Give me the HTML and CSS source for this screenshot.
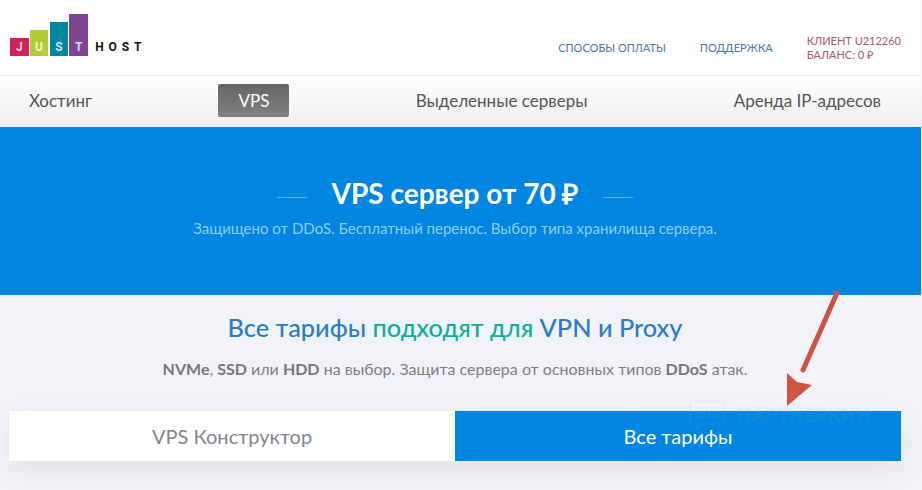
FILE: index.html
```html
<!DOCTYPE html>
<html lang="ru">
<head>
  <meta charset="UTF-8" />
  <title>VPS сервер</title>
  <link rel="stylesheet" href="styles.css">
</head>
<body>
  <div class="page">
    <header class="top">
      <a class="logo">
        <span class="bar bar-j">J</span>
        <span class="bar bar-u">U</span>
        <span class="bar bar-s">S</span>
        <span class="bar bar-t">T</span>
        <span class="logo-host">HOST</span>
      </a>
      <nav class="top-links">
        <a>СПОСОБЫ ОПЛАТЫ</a>
        <a>ПОДДЕРЖКА</a>
        <div class="client">КЛИЕНТ U212260<br>БАЛАНС: 0 ₽</div>
      </nav>
    </header>

    <nav class="menu">
      <a>Хостинг</a>
      <a class="active">VPS</a>
      <a>Выделенные серверы</a>
      <a class="last">Аренда IP-адресов</a>
    </nav>

    <section class="hero">
      <h1><span>VPS сервер от 70 ₽</span></h1>
      <p>Защищено от DDoS. Бесплатный перенос. Выбор типа хранилища сервера.</p>
    </section>

    <section class="plans">
      <h2>Все тарифы <span>подходят для</span> VPN и Proxy</h2>
      <p><b>NVMe</b>, <b>SSD</b> или <b>HDD</b> на выбор. Защита сервера от основных типов <b>DDoS</b> атак.</p>
      <div class="tabs">
        <a class="tab">VPS Конструктор</a>
        <a class="tab tab-on">Все тарифы</a>
      </div>
    </section>
  </div>

  <div class="mark">
    <svg width="36" height="29" viewBox="0 0 36 29" fill="none" stroke="#a8b2c0" stroke-width="1.2">
      <path d="M3 1h30a2 2 0 0 1 2 2v19a2 2 0 0 1-2 2H14l-6 4v-4H3a2 2 0 0 1-2-2V3a2 2 0 0 1 2-2z"/>
      <rect x="7" y="12" width="9" height="5" rx="2"/>
      <rect x="20" y="12" width="9" height="5" rx="2"/>
    </svg>
    <span>ПАРТНЕРКИН</span>
  </div>

  <svg class="arrow" width="70" height="125" viewBox="0 0 70 125">
    <path d="M57 3 L23 80" stroke="#cf5247" stroke-width="5" stroke-linecap="round" fill="none"/>
    <path d="M7 116 L7 83 L17 92 L32 95 Z" fill="#cf5247"/>
  </svg>
</body>
</html>
```

FILE: styles.css
```css
* {
  margin: 0;
  padding: 0;
  box-sizing: border-box;
}
body {
  font-family: Lato, 'Open Sans', sans-serif;
  background: #f1f3f8;
  width: 922px;
  height: 490px;
  overflow: hidden;
  position: relative;
}
.page {
  width: 921px;
  height: 490px;
  background: #f1f3f8;
}
.top {
  height: 76px;
  background: #fff;
  border-bottom: 1px solid #e8e8ea;
  display: flex;
  justify-content: space-between;
  padding: 14px 20px 0 10px;
}
.logo {
  display: flex;
  align-items: flex-end;
  gap: 1.2px;
  height: 42px;
}
.bar {
  width: 18.6px;
  height: 18px;
  color: rgba(255, 255, 255, 0.8);
  font: bold 12px Roboto, sans-serif;
  text-align: center;
  line-height: 18px;
}
.bar-j { background: #d1215c; }
.bar-u { background: #b6cb38; height: 26px; line-height: 34px; }
.bar-s { background: #00879f; height: 34px; line-height: 50px; }
.bar-t { background: #7d4496; height: 42px; line-height: 66px; }
.logo-host {
  font: bold 12px Roboto, sans-serif;
  letter-spacing: 4.9px;
  line-height: 18px;
  margin-left: 6px;
  color: #111;
}
.top-links {
  display: flex;
  align-items: flex-start;
  font-size: 11px;
  color: #4a77a8;
}
.top-links a {
  margin-top: 27px;
  margin-right: 34px;
}
.client {
  margin-top: 20px;
  line-height: 14px;
  color: #a9566f;
}
.menu {
  height: 51px;
  background: linear-gradient(to bottom, #fff, #eeeef0);
  display: flex;
  justify-content: space-between;
  align-items: center;
  padding: 0 40px 2px 29px;
  font-size: 17px;
  color: #555;
}
.menu a.active {
  width: 71px;
  height: 33px;
  line-height: 33px;
  text-align: center;
  background: linear-gradient(to bottom, #666, #818181);
  border-radius: 2px;
  color: #fff;
}
.menu a.last {
  margin-left: 20px;
}
.hero {
  height: 168px;
  background: #0085e0;
  text-align: center;
  padding: 42px 11px 0 0;
}
.hero h1 {
  font-size: 28px;
  line-height: 36px;
  font-weight: bold;
  color: #fff;
}
.hero h1 span {
  display: inline-flex;
  align-items: center;
  gap: 25px;
}
.hero h1 span::before,
.hero h1 span::after {
  content: "";
  width: 30px;
  height: 1px;
  background: #5cb3ee;
  margin-top: 9px;
}
.hero p {
  margin-top: 8px;
  font-size: 15px;
  color: #8fd0f7;
}
.plans {
  text-align: center;
  padding-top: 16px;
}
.plans h2 {
  font-size: 25.3px;
  line-height: 32px;
  font-weight: 500;
  color: #2a7cc8;
  margin-right: 11px;
}
.plans h2 span {
  color: #12ad96;
}
.plans p {
  margin: 16px 11px 0 0;
  font-size: 16px;
  color: #7f7f84;
}
.plans b {
  color: #77777c;
}
.tabs {
  display: flex;
  margin: 33px 20px 0 9px;
  height: 50px;
  box-shadow: 0 10px 30px rgba(0, 0, 0, 0.07);
}
.tab {
  flex: 1;
  background: #fff;
  line-height: 50px;
  font-size: 20px;
  color: #7f858c;
}
.tab-on {
  background: #0085e0;
  color: #fff;
}
.mark {
  position: absolute;
  left: 689px;
  top: 400px;
  display: flex;
  gap: 12px;
  opacity: 0.16;
  font-size: 19px;
  letter-spacing: 0.6px;
  color: transparent;
  -webkit-text-stroke: 0.7px #a8b2c0;
  align-items: center;
}
.arrow {
  position: absolute;
  left: 780px;
  top: 290px;
}
```
